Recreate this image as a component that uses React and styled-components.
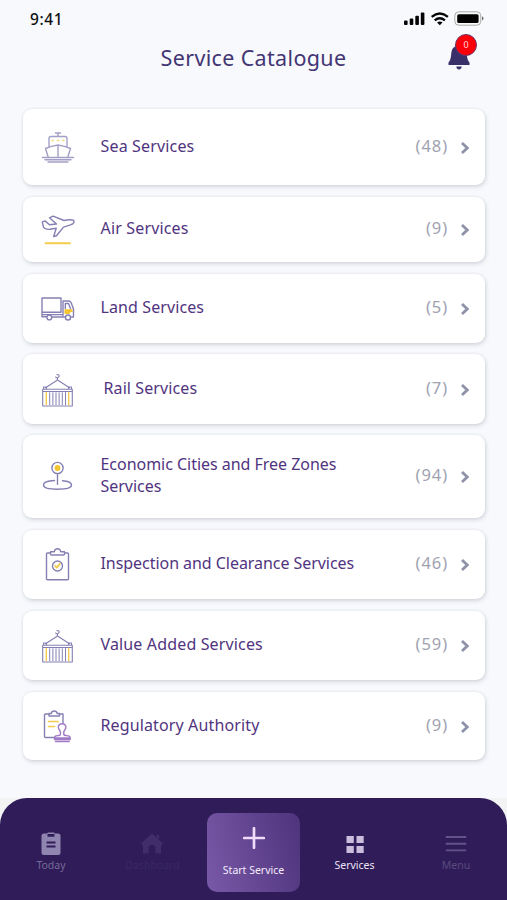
import React from 'react';
import styled, { createGlobalStyle } from 'styled-components';

const services = [
    { name: 'Sea Services', count: 48, height: 76, icon: ShipIcon, gap: 0, drop: 1, faded: true, tracking: 0.16 },
    { name: 'Air Services', count: 9, height: 65, icon: PlaneIcon, tracking: 0.16 },
    { name: 'Land Services', count: 5, height: 69, icon: TruckIcon, tracking: 0.1 },
    { name: 'Rail Services', count: 7, height: 70, icon: ContainerIcon, gap: 11, indent: 3, drop: 1, tracking: 0.1 },
    { name: 'Economic Cities and Free Zones Services', count: 94, height: 83, icon: PinIcon, gap: 11, drop: 1, tracking: -0.03 },
    { name: 'Inspection and Clearance Services', count: 46, height: 69, icon: InspectIcon, tracking: -0.05 },
    { name: 'Value Added Services', count: 59, height: 69, icon: ContainerIcon, tracking: 0.15 },
    { name: 'Regulatory Authority', count: 9, height: 68, icon: StampIcon, drop: 1, tracking: 0.13 },
];

const App = () => {
    return (
        <Screen>
            <GlobalStyle />
            <StatusBar>
                <Time>9:41</Time>
                <StatusIcons />
            </StatusBar>

            <Header>
                <Title>Service Catalogue</Title>
                <BellButton>
                    <BellIcon />
                    <Badge>0</Badge>
                </BellButton>
            </Header>

            <List>
                {services.map(({ name, count, height, icon: Icon, gap, indent, drop, faded, tracking }) => (
                    <Card key={name} $height={height} $gap={gap} $drop={drop}>
                        <IconBox $faded={faded}>
                            <Icon />
                        </IconBox>
                        <Name $indent={indent} $tracking={tracking}>{name}</Name>
                        <Count>({count})</Count>
                        <Chevron viewBox="0 0 10 14">
                            <path d="M2 2l5.3 5L2 12" />
                        </Chevron>
                    </Card>
                ))}
            </List>

            <NavWrap>
                <Nav>
                    <NavItem $color="#766a98">
                        <svg width="20" height="24" viewBox="0 0 20 24">
                            <path fill="#9085b0" fillRule="evenodd" d="M3 1.500h3Q6.500.5 7.500.5h5q1 0 1.500 1h3q2.500 0 2.500 2.500v16.500q0 2.500-2.500 2.500H3Q.5 23 .5 20.500V4Q.5 1.500 3 1.500zM6.500 2v2.700h7V2zM5.500 9.500v2h9v-2zM5.500 13.500v2h9v-2z" />
                        </svg>
                        <span>Today</span>
                    </NavItem>
                    <NavItem $color="#3b2864">
                        <svg width="22" height="24" viewBox="0 0 22 24">
                            <path fill="#412d69" d="M11 1.500L21.500 11v2H20v8.500h-5.500V16q0-3-3.500-3t-3.500 3v5.500H2V13H.5v-2zM15.500 3H18v4l-2.500-2z" />
                        </svg>
                        <span>Dashboard</span>
                    </NavItem>
                    <StartButton>
                        <svg width="22" height="22" viewBox="0 0 22 22">
                            <path d="M11 1.200v19.600M1.200 11h19.600" stroke="#f0dcfa" strokeWidth="2.700" strokeLinecap="round" />
                        </svg>
                        <span>Start Service</span>
                    </StartButton>
                    <NavItem $color="#ece4f6">
                        <svg width="18" height="24" viewBox="0 0 18 24">
                            <path fill="#cbbddd" d="M.5 4h7.300v7H.5zM10.500 4h7.200v7h-7.200zM.5 14h7.300v7H.5zM10.500 14h7.200v7h-7.200z" />
                        </svg>
                        <span>Services</span>
                    </NavItem>
                    <NavItem $color="#594a7f">
                        <svg width="22" height="24" viewBox="0 0 22 24">
                            <path d="M.7 5h20.600M.7 11.700h20.600M.7 18.400h20.600" stroke="#62528a" strokeWidth="1.900" />
                        </svg>
                        <span>Menu</span>
                    </NavItem>
                </Nav>
            </NavWrap>
        </Screen>
    );
};

export default App;

function StatusIcons() {
    return (
        <svg width="82" height="18" viewBox="0 0 82 18">
            <g fill="#050505">
                <rect x="1" y="10.500" width="3.600" height="4.500" rx="1" />
                <rect x="6.700" y="8.500" width="3.600" height="6.500" rx="1" />
                <rect x="12.300" y="5.700" width="3.600" height="9.300" rx="1" />
                <rect x="17.800" y="2.500" width="3.600" height="12.500" rx="1" />
                <path d="M36.800 15.200l-2.700-2.700q2.700-2.200 5.400 0z" />
            </g>
            <g fill="none" stroke="#050505" strokeWidth="2.300">
                <path d="M28.700 6.900q8.100-6.800 16.200 0" />
                <path d="M31.700 10.400q5.100-4.300 10.200 0" />
            </g>
            <rect x="51.800" y="1.800" width="26" height="13.400" rx="4" fill="#f8faf8" stroke="#a8aaa8" strokeWidth="1" />
            <rect x="54.200" y="4.200" width="21.400" height="8.800" rx="1.500" fill="#000" />
            <path d="M79.200 6.300q2.600 2.200 0 4.400z" fill="#555" />
        </svg>
    );
}

function BellIcon() {
    return (
        <svg width="24" height="28" viewBox="0 0 24 28">
            <path fill="#3a3069" d="M12 1q1.700 0 2 1.800 5.300 1.400 5.700 7.200.2 7 2.800 9.500V22h-21v-2.500Q4 17 4.300 10 4.700 4.200 10 2.800 10.300 1 12 1zM9.200 23.500h5.600q-.6 3-2.800 3t-2.800-3z" />
        </svg>
    );
}

function ShipIcon() {
    return (
        <svg viewBox="0 0 36 36">
            <path d="M15.500 3h5M18 3v3.500M9 16.500v-8q0-2 2-2h14q2 0 2 2v8M8 26.500l-2.500-8q5.500-2.500 12.500-3.500 7 1 12.500 3.500l-2.500 8M18 15v11.500" />
            <path d="M2.500 27.500h31M5 29.800h26M8 32h20" />
            <path className="gold" strokeWidth="1.600" d="M12 10.500h1.200M17.400 10.500h1.200M22.800 10.500H24" />
        </svg>
    );
}

function PlaneIcon() {
    return (
        <svg viewBox="0 0 36 36">
            <path d="M2.300 9.800l2.700-.9 4.500 3.900 7-.8L9.500 5.800l3.600-1.700L24 8.500l5-.7q4.800-.3 5 1.600.4 2-3.500 3.500l-7 2.200-7 8.700-2.800.7 2.500-8.300-6.200 1.100Q5 17.800 3.400 15z" />
            <path className="gold" strokeWidth="1.900" d="M5.500 31.300h24.500" />
        </svg>
    );
}

function TruckIcon() {
    return (
        <svg viewBox="0 0 36 36">
            <path d="M2 7h19v14.200H2zM23 24.500V10h5.500q2.500 0 3.500 4l1.500 4v7.500M2 21.500v4.300h4.500M12 26h13M31.500 26h2M2 23.600h21" />
            <path d="M25.300 17.500v-5h3.200l2 5" />
            <path className="goldfill" d="M24.500 18.200h8V21h-2l-1 2h-5z" />
            <circle cx="9.300" cy="26.500" r="2.400" />
            <circle cx="28" cy="26.500" r="2.500" />
        </svg>
    );
}

function ContainerIcon() {
    return (
        <svg viewBox="0 0 36 36">
            <path strokeWidth="1.100" d="M2.700 17.200h29.600v16.800H2.700zM3.500 15h3v2.200h-3zM28.500 15h3v2.200h-3zM5.500 15.700L17.500 8l12 7.700M17.500 7.700v-2q2.600-1 1.300-2.700-.8-.8-1.900-.3M15.800 4.900q0 1 1.700 1" />
            <path strokeWidth="1" d="M3 19.500h29M9.700 20.700v12M12.900 20.700v12M16 20.700v12M19.100 20.700v12M22.300 20.700v12M25.500 20.700v12" />
            <path className="gold" d="M6.300 20.700v12M28.700 20.700v12" />
        </svg>
    );
}

function PinIcon() {
    return (
        <svg viewBox="0 0 36 36">
            <circle cx="17.500" cy="9" r="5.600" />
            <circle className="goldfill" cx="17.500" cy="9" r="2.900" />
            <path d="M17.500 14.600v10.600M14.500 21.500q-11 .4-11 4.500 0 4.200 14 4.200t14-4.200q0-3.700-9-4.300" />
        </svg>
    );
}

function InspectIcon() {
    return (
        <svg viewBox="0 0 36 36">
            <path d="M10.500 6h-3q-1 0-1 1v24.800q0 1 1 1h20q1 0 1-1V7q0-1-1-1h-3" />
            <path d="M10.500 7V4.700h3.800q.4-3 3.200-3t3.200 3h3.800V7q0 1-1 1h-12q-1 0-1-1z" />
            <circle cx="17.500" cy="19" r="5" />
            <path className="gold" strokeWidth="2" d="M15.300 19l1.500 1.600 3-3.700" />
        </svg>
    );
}

function StampIcon() {
    return (
        <svg viewBox="0 0 36 36">
            <path d="M9 5H5.500Q4.500 5 4.500 6v21.500q0 1 1 1H14M19.500 5H23v9M9 7V4.500h2.200q.5-2.500 3-2.500t3 2.500h2.300V7z" />
            <path className="gold" strokeWidth="1.700" d="M8.500 12.500H18M8.500 17.500h6" />
            <path className="violet" d="M20.500 25q.3-2-1-4-1.200-1.500-1.200-3 .4-3.200 3.800-3.200t3.800 3.200q0 1.500-1.200 3-1.300 2-1 4 .3 1.600 3 1.600 3.500 0 3.500 2.400H14.500q0-2.400 3-2.400t3-1.600zM14.500 29h15.700v1.500H14.500zM15.500 32.500h13.700" />
        </svg>
    );
}

const GlobalStyle = createGlobalStyle`
    * {
        box-sizing: border-box;
    }

    body {
        margin: 0;
        background: #f7f9fd;
    }
`

const Screen = styled.div`
    width: 507px;
    height: 900px;
    display: flex;
    flex-direction: column;
    overflow: hidden;
    background: #f7f9fd;
    font-family: "Noto Sans", sans-serif;
`

const StatusBar = styled.div`
    height: 36px;
    padding: 10px 22px 0 30px;
    display: flex;
    justify-content: space-between;
    align-items: flex-start;
`

const Time = styled.div`
    font-size: 15.5px;
    line-height: 19px;
    font-weight: 500;
    letter-spacing: 0.6px;
    color: #111;
`

const Header = styled.header`
    height: 73px;
    padding-left: 60px;
    display: grid;
    grid-template-columns: 1fr 60px;
    align-items: start;
`

const Title = styled.h1`
    margin: 7px 0 0;
    text-align: center;
    font-size: 21.5px;
    line-height: 30px;
    font-weight: 400;
    letter-spacing: 0.35px;
    color: #433673;
`

const BellButton = styled.button`
    position: relative;
    width: 24px;
    height: 28px;
    margin: 7px 0 0;
    padding: 0;
    border: 0;
    background: none;
    font-family: inherit;
`

const Badge = styled.span`
    position: absolute;
    top: -9px;
    left: 8px;
    width: 22px;
    height: 22px;
    border: 1px solid #6d3568;
    border-radius: 50%;
    background: #fb0009;
    color: #ffd5d5;
    font-size: 9px;
    line-height: 19px;
    text-align: center;
`

const List = styled.main`
    flex: 1;
    padding: 0 22px 0 23px;
`

const Card = styled.div`
    display: flex;
    align-items: center;
    height: ${({ $height }) => $height}px;
    margin-top: ${({ $gap = 12 }) => $gap}px;
    padding: ${({ $drop = 0 }) => $drop}px 15px 0 17px;
    border-radius: 9px;
    background: #fff;
    box-shadow: 1px 2px 4px rgba(60, 65, 80, 0.17), 0 0 3px rgba(60, 65, 80, 0.09);
`

const IconBox = styled.div`
    width: 36px;
    height: 36px;
    flex: none;
    opacity: ${({ $faded }) => ($faded ? 0.75 : 1)};

    svg {
        display: block;
        width: 36px;
        height: 36px;
        fill: none;
        stroke: #8580b3;
        stroke-width: 1.4;
        stroke-linecap: round;
        stroke-linejoin: round;
    }

    .gold {
        stroke: #f3cc50;
    }

    .goldfill {
        fill: #f4c52e;
        stroke: none;
    }

    .violet {
        stroke: #a17bc5;
    }
`

const Name = styled.div`
    width: 290px;
    margin: -4px 0 0 ${({ $indent = 0 }) => 24.5 + $indent}px;
    padding-right: 20px;
    font-size: 16px;
    line-height: 22px;
    letter-spacing: ${({ $tracking }) => $tracking}px;
    color: #513480;
`

const Count = styled.div`
    flex: 1;
    margin-top: -4px;
    text-align: right;
    white-space: nowrap;
    font-size: 16.5px;
    line-height: 22px;
    letter-spacing: 0.9px;
    color: #a0a2b1;
`

const Chevron = styled.svg`
    width: 10px;
    height: 14px;
    margin-left: 12px;
    flex: none;
    fill: none;
    stroke: #8d92a8;
    stroke-width: 2.800;
`

const NavWrap = styled.div`
    height: 102px;
    background: #f3f3f4;
`

const Nav = styled.nav`
    height: 102px;
    display: grid;
    grid-template-columns: 102px 101px 101px 101px 102px;
    justify-items: center;
    border-radius: 27px 27px 0 0;
    background: #301c59;
`

const NavItem = styled.div`
    display: flex;
    flex-direction: column;
    align-items: center;
    padding-top: 34px;
    font-size: 10.5px;
    line-height: 14px;
    color: ${({ $color }) => $color};

    span {
        margin-top: 2px;
    }
`

const StartButton = styled.button`
    width: 93px;
    height: 79px;
    margin-top: 15px;
    padding: 14px 0 0;
    display: flex;
    flex-direction: column;
    align-items: center;
    border: 0;
    border-radius: 10px;
    background: linear-gradient(75deg, #7859a8, #4f337c);
    font-family: inherit;
    font-size: 10.5px;
    line-height: 14px;
    color: #f5edfb;

    span {
        margin-top: 14px;
    }
`
